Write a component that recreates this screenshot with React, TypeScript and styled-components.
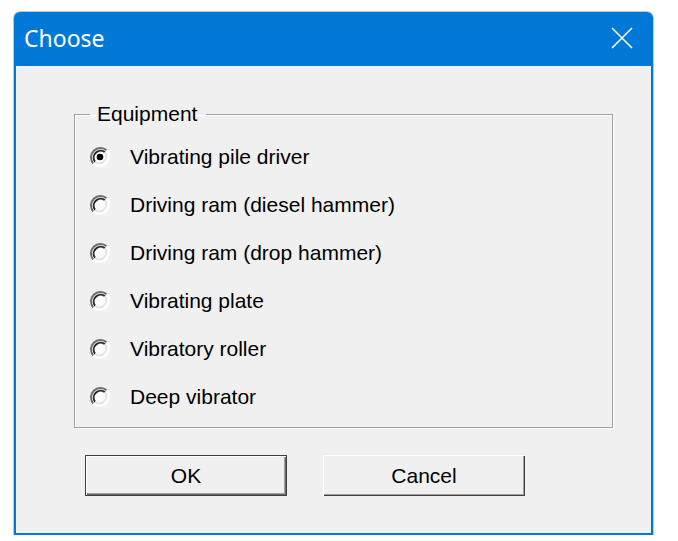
import React from 'react';
import styled, { createGlobalStyle } from 'styled-components';

const GlobalStyle = createGlobalStyle`
  html, body {
    margin: 0;
    padding: 0;
    background: #ffffff;
  }
`;

const options = [
  'Vibrating pile driver',
  'Driving ram (diesel hammer)',
  'Driving ram (drop hammer)',
  'Vibrating plate',
  'Vibratory roller',
  'Deep vibrator',
];

const RadioMark: React.FC<{ checked: boolean }> = ({ checked }) => (
  <RadioSvg width="22" height="22" viewBox="0 0 22 22">
    <circle cx="11" cy="11" r="9.5" fill="#ffffff" />
    <path d="M17.7 4.3 A9.5 9.5 0 0 0 4.3 17.7" fill="none" stroke="#6e6e6e" strokeWidth="2" />
    <path d="M15.9 6.1 A7 7 0 0 0 6.1 15.9" fill="none" stroke="#2a2a2a" strokeWidth="2" />
    <path d="M4.3 17.7 A9.5 9.5 0 0 0 17.7 4.3" fill="none" stroke="#ffffff" strokeWidth="2" />
    <path d="M6.1 15.9 A7 7 0 0 0 15.9 6.1" fill="none" stroke="#e3e3e3" strokeWidth="2" />
    {checked && <circle cx="11" cy="11" r="3.3" fill="#000000" />}
  </RadioSvg>
);

const App: React.FC = () => {
  const [selected, setSelected] = React.useState(0);

  return (
    <>
      <GlobalStyle />
      <Window>
        <TitleBar>
          <Title>Choose</Title>
          <CloseButton aria-label="Close">
            <svg width="22" height="22" viewBox="0 0 22 22">
              <path d="M1 1 L21 21 M21 1 L1 21" stroke="#ffffff" strokeWidth="1.6" />
            </svg>
          </CloseButton>
        </TitleBar>
        <Client>
          <Group>
            <Legend>Equipment</Legend>
            {options.map((label, index) => (
              <Option key={label} onClick={() => setSelected(index)}>
                <RadioMark checked={selected === index} />
                <OptionLabel>{label}</OptionLabel>
              </Option>
            ))}
          </Group>
          <ButtonRow>
            <Button $default>OK</Button>
            <Button>Cancel</Button>
          </ButtonRow>
        </Client>
      </Window>
    </>
  );
};

export default App;

const Window = styled.div`
  margin: 12px 0 0 14px;
  width: 639px;
  height: 523px;
  display: flex;
  flex-direction: column;
  border-radius: 6px 6px 0 0;
  overflow: hidden;
  box-shadow: 0 0 0 1px #c8c8c8;
`;

const TitleBar = styled.div`
  height: 54px;
  background: #0078d7;
  display: flex;
  align-items: center;
  justify-content: space-between;
  padding: 0 20px 0 10px;
  flex-shrink: 0;
`;

const Title = styled.span`
  font-family: 'Noto Sans', 'Open Sans', sans-serif;
  font-size: 23px;
  color: #ffffff;
  margin-top: -2px;
`;

const CloseButton = styled.div`
  display: flex;
  align-items: center;
  margin-top: -2px;
`;

const Client = styled.div`
  flex: 1;
  background: #f0f0f0;
  border: 2px solid #0078d7;
  border-top: none;
  padding: 36px 38px 0 58px;
  font-family: 'Liberation Sans', Arial, sans-serif;
  font-size: 21px;
  color: #000000;
`;

const Group = styled.fieldset`
  margin: 0;
  height: 326px;
  box-sizing: border-box;
  border: 1px solid #a0a0a0;
  box-shadow: 1px 1px 0 #ffffff, inset 1px 1px 0 #ffffff;
  padding: 7px 0 0 14px;
  display: flex;
  flex-direction: column;
`;

const Legend = styled.legend`
  padding: 0 9px 0 7px;
  margin-left: 1px;
  line-height: 24px;
`;

const Option = styled.div`
  display: flex;
  align-items: center;
  height: 48px;
  gap: 19px;
  cursor: default;
`;

const RadioSvg = styled.svg`
  flex-shrink: 0;
`;

const OptionLabel = styled.span`
  line-height: 24px;
`;

const ButtonRow = styled.div`
  display: flex;
  gap: 36px;
  margin: 27px 0 0 11px;
`;

const Button = styled.button<{ $default?: boolean }>`
  width: 202px;
  height: 41px;
  box-sizing: border-box;
  background: #f0f0f0;
  font-family: 'Liberation Sans', Arial, sans-serif;
  font-size: 21px;
  color: #000000;
  padding: 0;
  border: none;
  border-radius: 0;
  box-shadow: ${({ $default }) =>
    $default
      ? 'inset 0 0 0 1px #404040, inset 2px 2px 0 #ffffff, inset -2px -2px 0 #696969, inset -3px -3px 0 #a0a0a0'
      : 'inset 1px 1px 0 #ffffff, inset -1px -1px 0 #404040, inset -2px -2px 0 #a0a0a0'};
`;
